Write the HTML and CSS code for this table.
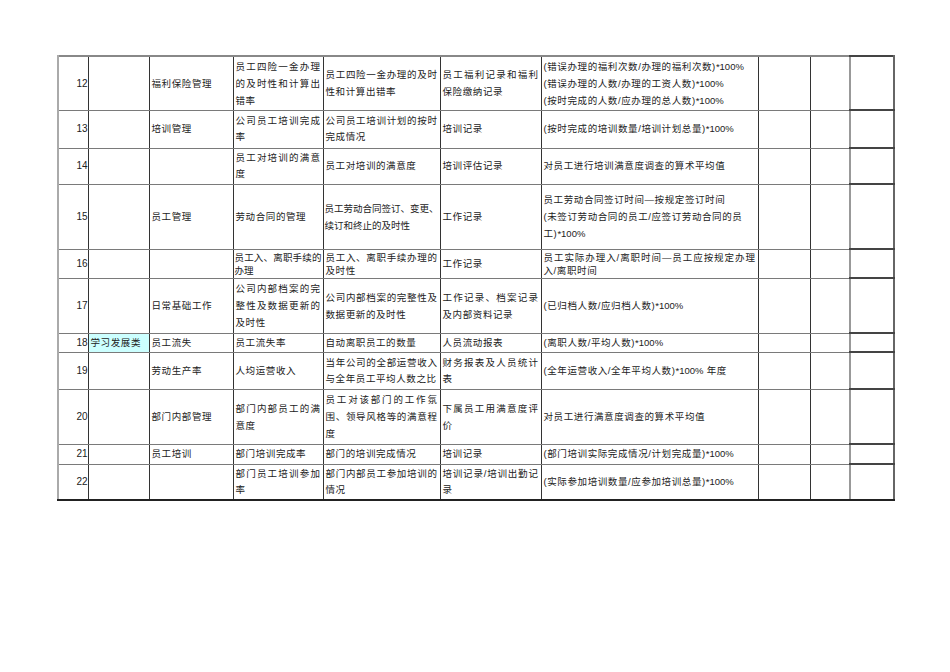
FILE: index.html
```html
<!DOCTYPE html>
<html lang="zh">
<head>
<meta charset="utf-8">
<link rel="stylesheet" href="styles.css">
</head>
<body>
<table class="kpi">
  <colgroup>
    <col class="c-no"><col class="c-cat"><col class="c-item"><col class="c-ind"><col class="c-def"><col class="c-src"><col class="c-calc"><col class="c-e1"><col class="c-e2"><col class="c-e3">
  </colgroup>
  <tbody>
    <tr class="h54 lh17"><td class="no">12</td><td></td><td>福利保险管理</td><td class="j">员工四险一金办理的及时性和计算出错率</td><td class="j">员工四险一金办理的及时性和计算出错率</td><td class="j">员工福利记录和福利保险缴纳记录</td><td>(错误办理的福利次数/办理的福利次数)<span class="n">*100%</span><br>(错误办理的人数/办理的工资人数)<span class="n">*100%</span><br>(按时完成的人数/应办理的总人数)<span class="n">*100%</span></td><td></td><td></td><td class="last"></td></tr>
    <tr class="h38"><td class="no">13</td><td></td><td>培训管理</td><td class="j">公司员工培训完成率</td><td class="j">公司员工培训计划的按时完成情况</td><td>培训记录</td><td>(按时完成的培训数量/培训计划总量)<span class="n">*100%</span></td><td></td><td></td><td class="last"></td></tr>
    <tr class="h36"><td class="no">14</td><td></td><td></td><td class="j">员工对培训的满意度</td><td>员工对培训的满意度</td><td>培训评估记录</td><td>对员工进行培训满意度调查的算术平均值</td><td></td><td></td><td class="last"></td></tr>
    <tr class="h65 lh17"><td class="no">15</td><td></td><td>员工管理</td><td>劳动合同的管理</td><td class="tight">员工劳动合同签订、变更、续订和终止的及时性</td><td>工作记录</td><td class="j">员工劳动合同签订时间—按规定签订时间<br>(未签订劳动合同的员工/应签订劳动合同的员<br>工)<span class="n">*100%</span></td><td></td><td></td><td class="last"></td></tr>
    <tr class="h29 lh13"><td class="no">16</td><td></td><td></td><td class="tight">员工入、离职手续的办理</td><td class="j">员工入、离职手续办理的及时性</td><td>工作记录</td><td class="j">员工实际办理入/离职时间—员工应按规定办理入/离职时间</td><td></td><td></td><td class="last"></td></tr>
    <tr class="h55 lh17"><td class="no">17</td><td></td><td>日常基础工作</td><td class="j">公司内部档案的完整性及数据更新的及时性</td><td class="j">公司内部档案的完整性及数据更新的及时性</td><td class="j">工作记录、档案记录及内部资料记录</td><td>(已归档人数/应归档人数)<span class="n">*100%</span></td><td></td><td></td><td class="last"></td></tr>
    <tr class="h19"><td class="no">18</td><td class="hl">学习发展类</td><td>员工流失</td><td>员工流失率</td><td>自动离职员工的数量</td><td>人员流动报表</td><td>(离职人数/平均人数)<span class="n">*100%</span></td><td></td><td></td><td class="last"></td></tr>
    <tr class="h37"><td class="no">19</td><td></td><td>劳动生产率</td><td>人均运营收入</td><td class="j">当年公司的全部运营收入与全年员工平均人数之比</td><td class="j">财务报表及人员统计表</td><td>(全年运营收入/全年平均人数)<span class="n">*100%</span> 年度</td><td></td><td></td><td class="last"></td></tr>
    <tr class="h55 lh17"><td class="no">20</td><td></td><td>部门内部管理</td><td class="j">部门内部员工的满意度</td><td class="j">员工对该部门的工作氛围、领导风格等的满意程度</td><td class="j">下属员工用满意度评价</td><td>对员工进行满意度调查的算术平均值</td><td></td><td></td><td class="last"></td></tr>
    <tr class="h20"><td class="no">21</td><td></td><td>员工培训</td><td>部门培训完成率</td><td>部门的培训完成情况</td><td>培训记录</td><td>(部门培训实际完成情况/计划完成量)<span class="n">*100%</span></td><td></td><td></td><td class="last"></td></tr>
    <tr class="h36 end"><td class="no">22</td><td></td><td></td><td class="j">部门员工培训参加率</td><td class="j">部门内部员工参加培训的情况</td><td class="j">培训记录/培训出勤记录</td><td>(实际参加培训数量/应参加培训总量)<span class="n">*100%</span></td><td></td><td></td><td class="last"></td></tr>
  </tbody>
</table>
</body>
</html>
```

FILE: styles.css
```css
html, body {
  margin: 0;
  padding: 0;
  background: #ffffff;
}
body {
  width: 950px;
  height: 672px;
  padding: 55px 0 0 57px;
  box-sizing: border-box;
  font-family: "Liberation Sans", "Noto Sans CJK SC", sans-serif;
  color: #222;
}
.kpi {
  border-collapse: collapse;
  table-layout: fixed;
  width: 836px;
  font-size: 9.5px;
  letter-spacing: 0.6px;
  line-height: 16px;
  border-top: 2px solid #888;
}
.c-no { width: 30px; }
.c-cat { width: 61px; }
.c-item { width: 84px; }
.c-ind { width: 90px; }
.c-def { width: 117px; }
.c-src { width: 101px; }
.c-calc { width: 217px; }
.c-e1 { width: 52px; }
.c-e2 { width: 40px; }
.c-e3 { width: 44px; }

.kpi td {
  padding: 0 2px;
  vertical-align: middle;
  text-align: left;
  border-left: 1px solid #333;
  border-right: 1px solid #333;
  border-top: 1px solid #7a7a7a;
  border-bottom: 1px solid #7a7a7a;
  overflow: hidden;
  word-break: break-all;
}
.kpi td:first-child {
  border-left: 2px solid #aaa;
}
.kpi td.last {
  border-left: 2px solid #999;
  border-right: 2px solid #666;
  border-top: 2px solid #444;
  border-bottom: 2px solid #444;
}
.kpi td.no {
  text-align: right;
  padding-right: 0;
  letter-spacing: 0;
  font-size: 10px;
}
.kpi td.j {
  text-align: justify;
}
.kpi td.tight {
  letter-spacing: 0;
  padding: 0 1px;
  text-align: justify;
}
.kpi td.hl {
  background: #ccffff;
}
.kpi .n {
  letter-spacing: 0;
}
.kpi tr.end td {
  border-bottom: 2px solid #222;
}
.lh17 td { line-height: 17px; }
.lh13 td { line-height: 13px; }
.h54 { height: 54px; }
.h38 { height: 38px; }
.h36 { height: 36px; }
.h65 { height: 65px; }
.h29 { height: 29px; }
.h55 { height: 55px; }
.h19 { height: 19px; }
.h37 { height: 37px; }
.h20 { height: 20px; }
```
